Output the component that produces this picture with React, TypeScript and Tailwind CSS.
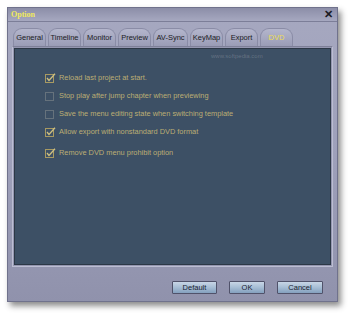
import React from "react";

const tabs = ["General", "Timeline", "Monitor", "Preview", "AV-Sync", "KeyMap", "Export", "DVD"];

const options = [
  { label: "Reload last project at start.", checked: true, gap: "mt-[24px]" },
  { label: "Stop play after jump chapter when previewing", checked: false, gap: "mt-[8px]" },
  { label: "Save the menu editing state when switching template", checked: false, gap: "mt-[8px]" },
  { label: "Allow export with nonstandard DVD format", checked: true, gap: "mt-[8px]" },
  { label: "Remove DVD menu prohibit option", checked: true, gap: "mt-[11px]" },
];

function Check({ checked }: { checked: boolean }) {
  return (
    <svg width="11" height="10" viewBox="0 0 11 10" className="shrink-0">
      <rect x="0.5" y="1.5" width="8" height="8" fill="none" stroke={checked ? "#a89a62" : "#66727c"} />
      {checked && <path d="M2 5 L4 7.5 L10 0.8" fill="none" stroke="#cfc080" strokeWidth="1.3" />}
    </svg>
  );
}

export default function App() {
  return (
    <div className="w-[350px] h-[314px] bg-white pt-[7px] pl-[7px] font-['Liberation_Sans',Arial,sans-serif]">
      <div className="relative w-[331px] h-[295px] flex flex-col bg-gradient-to-b from-[#a6a8c0] via-[#9ea0ba] to-[#9092ac] border border-[#70728c] shadow-[3px_4px_6px_rgba(0,0,0,0.45)]">
        {/* title bar */}
        <div className="h-[14px] flex items-center justify-between px-[3px] bg-gradient-to-b from-[#8c8ea8] to-[#a6a8c0] border-b border-[#7c7e98]">
          <span className="text-[8px] font-bold text-[#f0ea5c] font-['Liberation_Serif',serif] leading-none">Option</span>
          <span className="text-[11px] font-bold text-[#1a1a22] leading-none mr-[1px]">✕</span>
        </div>

        {/* tabs */}
        <div className="mt-[5px] ml-[5px] flex gap-[2px] h-[19px] items-end">
          {tabs.map(t => (
            <div
              key={t}
              className={`h-[18px] w-[33px] flex items-center justify-center rounded-t-[9px] border-x border-t border-[#8a8ca6] bg-gradient-to-b from-[#b4b6cc] to-[#9a9cb6] text-[7.5px] leading-none ${
                t === "DVD" ? "text-[#ecdf50]" : "text-[#1c1c24]"
              } ${t === "General" ? "w-[31px]" : ""} ${t === "AV-Sync" ? "w-[35px]" : ""}`}
            >
              {t}
            </div>
          ))}
        </div>

        {/* panel */}
        <div className="mx-[4px] border border-[#bcbed2] border-t-[#7e8098] p-[1px] bg-[#9496b0]">
          <div className="relative h-[217px] bg-[#3d5065] border border-[#2c3846] pl-[30px]">
            <div className="absolute top-[4px] left-[196px] text-[6px] text-white/20 leading-none">www.softpedia.com</div>
            {options.map(o => (
              <div key={o.label} className={`flex items-center gap-[3px] h-[10px] ${o.gap}`}>
                <Check checked={o.checked} />
                <span className="text-[7.4px] leading-none text-[#bcae74] whitespace-nowrap">{o.label}</span>
              </div>
            ))}
          </div>
        </div>

        {/* buttons */}
        <div className="mt-[14px] flex justify-end gap-[12px] pr-[14px]">
          {["Default", "OK", "Cancel"].map(b => (
            <button
              key={b}
              className={`h-[13px] ${b === "OK" ? "w-[36px]" : b === "Default" ? "w-[45px]" : "w-[46px]"} border border-[#50526a] rounded-[1px] bg-gradient-to-b from-[#c8d6e6] via-[#a6bdd4] to-[#84a0be] text-[7.5px] leading-none text-[#1a2230]`}
            >
              {b}
            </button>
          ))}
        </div>
      </div>
    </div>
  );
}
